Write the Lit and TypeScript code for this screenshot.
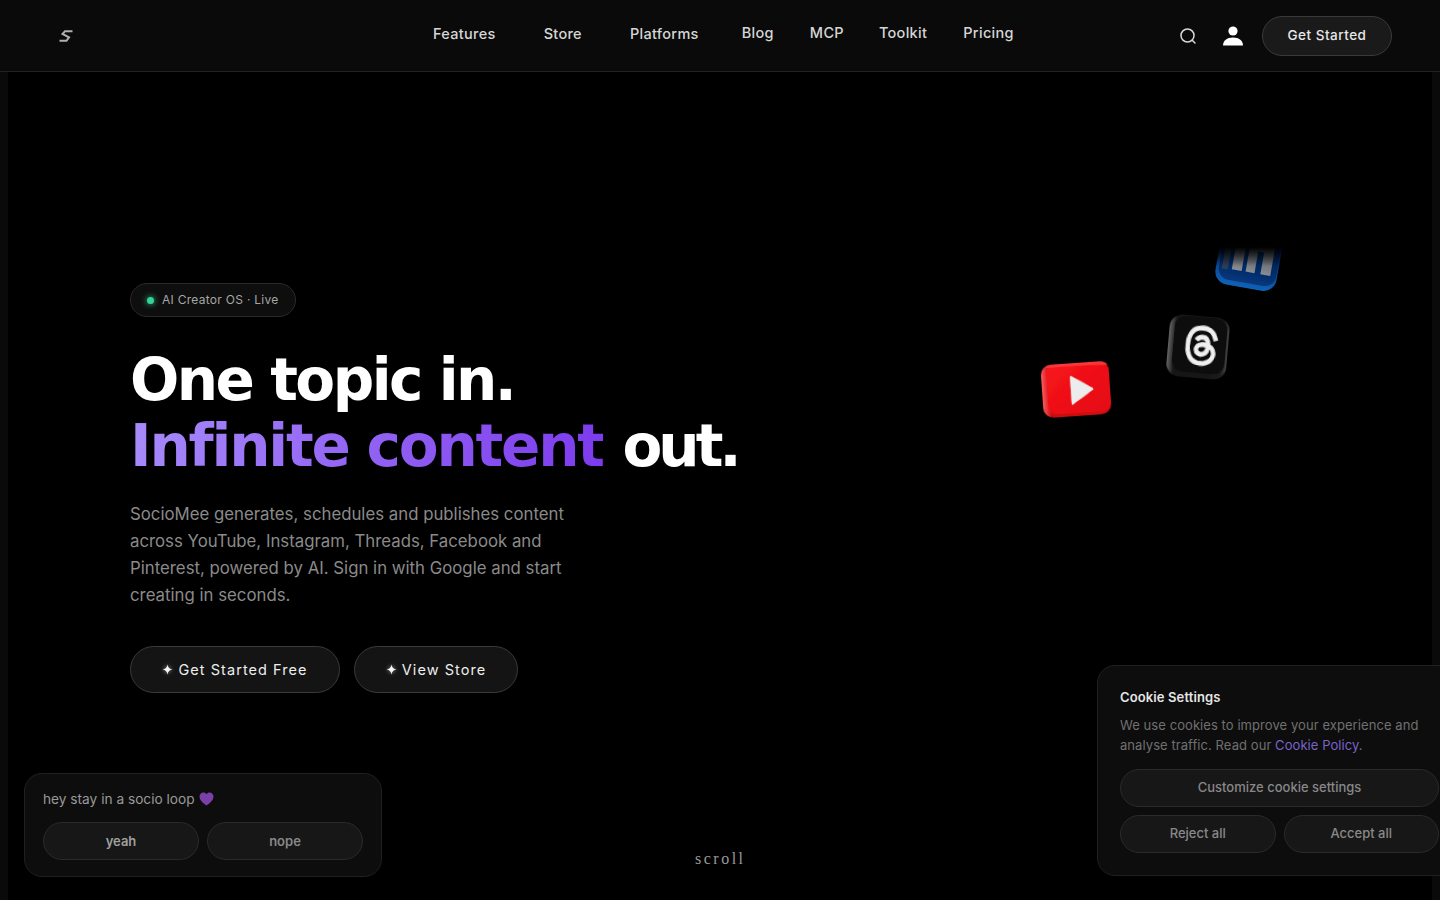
import { LitElement, html, css, svg } from "lit";
import { customElement } from "lit/decorators.js";

const navItems = [
  { label: "Features", cls: "drop" },
  { label: "Store", cls: "drop" },
  { label: "Platforms", cls: "plat" },
  { label: "Blog", cls: "up" },
  { label: "MCP", cls: "up tight" },
  { label: "Toolkit", cls: "up" },
  { label: "Pricing", cls: "up" },
];

const threadsPath = "M12.186 24h-.007c-3.581-.024-6.334-1.205-8.184-3.509C2.35 18.44 1.5 15.586 1.472 12.01v-.017c.03-3.579.879-6.43 2.525-8.482C5.845 1.205 8.6.024 12.18 0h.014c2.746.02 5.043.725 6.826 2.098 1.677 1.29 2.858 3.13 3.509 5.467l-2.04.569c-1.104-3.96-3.898-5.984-8.304-6.015-2.91.022-5.11.936-6.54 2.717C4.307 6.504 3.616 8.914 3.589 12c.027 3.086.718 5.496 2.057 7.164 1.43 1.783 3.631 2.698 6.54 2.717 2.623-.02 4.358-.631 5.8-2.045 1.647-1.613 1.618-3.593 1.09-4.798-.31-.71-.873-1.3-1.634-1.75-.192 1.352-.622 2.446-1.284 3.272-.886 1.102-2.14 1.704-3.73 1.79-1.202.065-2.361-.218-3.259-.801-1.063-.689-1.685-1.74-1.752-2.964-.065-1.19.408-2.285 1.33-3.082.88-.76 2.119-1.207 3.583-1.291a13.853 13.853 0 0 1 3.02.142c-.126-.742-.375-1.332-.75-1.757-.513-.586-1.308-.883-2.359-.89h-.029c-.844 0-1.992.232-2.721 1.32L7.734 7.847c.98-1.454 2.568-2.256 4.478-2.256h.044c3.194.02 5.097 1.975 5.287 5.388.108.046.216.094.321.142 1.49.7 2.58 1.761 3.154 3.07.797 1.82.871 4.79-1.548 7.158-1.85 1.81-4.094 2.628-7.277 2.65Zm1.003-11.69c-.242 0-.487.007-.739.021-1.836.103-2.98.946-2.916 2.143.067 1.256 1.452 1.839 2.784 1.767 1.224-.065 2.818-.543 3.086-3.71a10.5 10.5 0 0 0-2.215-.221z";

@customElement("app-root")
export class AppRoot extends LitElement {
  static styles = css`
    :host {
      display: block;
      position: relative;
      height: 900px;
      overflow: hidden;
      background: #0a0a0a;
      color: #fff;
      font-family: "Inter", "Noto Sans", sans-serif;
    }
    .nav {
      height: 71px;
      border-bottom: 1px solid #222;
      background: #0a0a0a;
      display: flex;
      align-items: center;
      position: relative;
    }
    .logo { margin-left: 58px; width: 16px; height: 14px; display: block; }
    .links {
      position: absolute;
      left: 433px;
      top: 0;
      height: 66px;
      display: flex;
      align-items: center;
    }
    .link { font-size: 14.5px; font-weight: 500; color: #d6d6d6; letter-spacing: 0.3px; white-space: nowrap; }
    .link.drop { margin-right: 48px; padding-top: 1px; }
    .link.plat { margin-right: 43px; padding-top: 1px; }
    .link.up { margin-right: 36px; padding-bottom: 1px; }
    .link.tight { margin-right: 35px; }
    .right {
      margin-left: auto;
      margin-right: 48px;
      display: flex;
      align-items: center;
    }
    .search { width: 18px; height: 18px; margin-right: 25px; display: block; }
    .user { width: 22px; height: 22px; margin-right: 18px; display: block; }
    .cta {
      width: 130px;
      height: 40px;
      box-sizing: border-box;
      border: 1px solid #3a3a3a;
      border-radius: 20px;
      background: #1a1a1a;
      color: #e8e8e8;
      font: 500 13.5px "Inter", sans-serif;
      letter-spacing: 0.5px;
      padding-bottom: 2px;
      display: flex;
      align-items: center;
      justify-content: center;
    }
    .main {
      margin: 0 8px;
      height: 828px;
      background: #000;
      position: relative;
      box-sizing: border-box;
      padding: 211px 0 0 122px;
    }
    .badge {
      display: inline-flex;
      align-items: center;
      height: 34px;
      box-sizing: border-box;
      width: 166px;
      padding: 0 0 2px 16px;
      border: 1px solid #2a2a2a;
      border-radius: 17px;
      background: #0e0e0e;
      font-size: 12px;
      color: #a5a5a5;
      letter-spacing: 0.28px;
      white-space: nowrap;
    }
    .dot {
      width: 7px;
      height: 7px;
      border-radius: 50%;
      background: #34d399;
      box-shadow: 0 0 6px #34d399;
      margin: 2px 8px 0 0;
    }
    h1 {
      margin: 30px 0 0;
      font: 700 58px/66px "DejaVu Sans", sans-serif;
      letter-spacing: -2.5px;
      color: #fff;
      white-space: nowrap;
    }
    .grad {
      background: linear-gradient(100deg, #a78bfa, #7c3aed);
      -webkit-background-clip: text;
      background-clip: text;
      color: transparent;
      letter-spacing: -2.2px;
    }
    .out { letter-spacing: -4px; margin-left: 2px; }
    .lead {
      margin: 22px 0 0;
      width: 450px;
      font-size: 16.8px;
      line-height: 27px;
      color: #8a8a8a;
    }
    .actions { display: flex; gap: 14px; margin-top: 37px; }
    .btn {
      height: 47px;
      box-sizing: border-box;
      border: 1px solid #3a3a3a;
      border-radius: 24px;
      background: #141414;
      color: #eee;
      font-size: 14.5px;
      font-weight: 400;
      letter-spacing: 1.05px;
      padding-bottom: 1px;
      display: flex;
      align-items: center;
      justify-content: center;
      gap: 5px;
    }
    .btn.a { width: 210px; }
    .btn.b { width: 164px; }
    .star { width: 11px; height: 11px; display: block; filter: drop-shadow(0 0 2px #fff8); }
    .float { position: absolute; left: 1020px; top: 240px; width: 280px; height: 190px; }
    .scroll {
      position: absolute;
      left: 687px;
      top: 778px;
      font: 16px "Liberation Serif", serif;
      letter-spacing: 2.5px;
      color: #9a9a9a;
    }
    .card {
      position: absolute;
      box-sizing: border-box;
      background: #0d0d0d;
      border: 1px solid #202020;
      border-radius: 18px;
    }
    .loop { left: 24px; top: 773px; width: 358px; height: 104px; padding: 16px 18px; }
    .loop p { margin: 0; font-size: 13.7px; line-height: 18px; color: #999; display: flex; align-items: center; gap: 4px; white-space: nowrap; }
    .heart { width: 15px; height: 14px; display: block; }
    .row { display: flex; gap: 8px; }
    .loop .row { margin-top: 14px; }
    .pill {
      flex: 1;
      height: 38px;
      box-sizing: border-box;
      border: 1px solid #2a2a2a;
      border-radius: 19px;
      background: #171717;
      font-size: 13px;
      font-weight: 600;
      color: #888;
      display: flex;
      align-items: center;
      justify-content: center;
    }
    .pill.y { color: #a0a0a0; }
    .cookie { left: 1097px; top: 665px; width: 365px; height: 211px; padding: 21px 22px; }
    .cookie h3 { margin: 0; font-size: 13px; line-height: 20px; font-weight: 600; color: #e6e6e6; letter-spacing: 0.12px; }
    .cookie p { margin: 8px 0 0; font-size: 13px; line-height: 20px; color: #707070; white-space: nowrap; letter-spacing: 0.07px; }
    .cookie a { color: #7a63c9; }
    .stack { margin-top: 14px; display: flex; flex-direction: column; gap: 8px; }
    .stack > .pill { flex: none; }
    .cookie .pill { font-weight: 500; padding-bottom: 2px; }
  `;

  star() {
    return html`<svg class="star" viewBox="0 0 12 12" fill="#f4f4f4"><path d="M6 0.5C6.5 3.8 8.2 5.5 11.5 6C8.2 6.5 6.5 8.2 6 11.5C5.5 8.2 3.8 6.5 0.5 6C3.8 5.5 5.5 3.8 6 0.5Z"/></svg>`;
  }

  render() {
    return html`
      <header class="nav">
        <svg class="logo" viewBox="0 0 16 14" fill="none" stroke="#b0b0b0" stroke-width="2">
          <path d="M14.5 2.2H7L4.5 5L11 8.4L8.5 11.8H1.5"/>
        </svg>
        <nav class="links">
          ${navItems.map((n) => html`<span class="link ${n.cls}">${n.label}</span>`)}
        </nav>
        <div class="right">
          <svg class="search" viewBox="0 0 18 18" fill="none" stroke="#d8d8d8" stroke-width="1.5" stroke-linecap="round">
            <circle cx="8.5" cy="8.5" r="6.5"/><path d="M13.2 13.2L16 16"/>
          </svg>
          <svg class="user" viewBox="0 0 22 22" fill="#fff">
            <circle cx="11" cy="6" r="4.6"/>
            <path d="M1 20.5c0-5 4-8 10-8s10 3 10 8z"/>
          </svg>
          <div class="cta">Get Started</div>
        </div>
      </header>
      <main class="main">
        <div class="badge"><span class="dot"></span>AI Creator OS · Live</div>
        <h1>One topic in.<br /><span class="grad">Infinite content</span> <span class="out">out.</span></h1>
        <p class="lead">SocioMee generates, schedules and publishes content across YouTube, Instagram, Threads, Facebook and Pinterest, powered by AI. Sign in with Google and start creating in seconds.</p>
        <div class="actions">
          <div class="btn a">${this.star()} Get Started Free</div>
          <div class="btn b">${this.star()} View Store</div>
        </div>
        <div class="scroll">scroll</div>
      </main>
      <svg class="float" viewBox="1020 240 280 190">
        <defs>
          <linearGradient id="yt" x1="0" y1="0" x2="1" y2="1"><stop offset="0" stop-color="#f8141c"/><stop offset="1" stop-color="#e40c12"/></linearGradient>
          <linearGradient id="ytb" x1="0" y1="0" x2="1" y2="0"><stop offset="0" stop-color="#ff5a5a"/><stop offset=".12" stop-color="#c90a10"/><stop offset="1" stop-color="#d40b12"/></linearGradient>
          <linearGradient id="tb" x1="0" y1="0" x2="1" y2="0"><stop offset="0" stop-color="#666"/><stop offset=".12" stop-color="#161616"/><stop offset=".9" stop-color="#1a1a1a"/><stop offset="1" stop-color="#444"/></linearGradient>
          <linearGradient id="li" x1="0" y1="0" x2="0" y2="1"><stop offset=".3" stop-color="#02173f"/><stop offset="1" stop-color="#07367c"/></linearGradient>
          <linearGradient id="lib" x1="0" y1="0" x2="0" y2="1"><stop offset=".5" stop-color="#052d6e"/><stop offset="1" stop-color="#0b63b8"/></linearGradient>
          <linearGradient id="lt" x1="0" y1="0" x2="0" y2="1"><stop offset="0" stop-color="#3a3f48"/><stop offset="1" stop-color="#8a8d92"/></linearGradient>
          <linearGradient id="fade" gradientUnits="userSpaceOnUse" x1="0" y1="247" x2="0" y2="266"><stop offset="0" stop-color="#000"/><stop offset="1" stop-color="#fff"/></linearGradient>
          <mask id="top" maskUnits="userSpaceOnUse" x="1200" y="240" width="100" height="60"><rect x="1200" y="240" width="100" height="60" fill="url(#fade)"/></mask>
          <filter id="soft" x="-5%" y="-5%" width="110%" height="110%"><feGaussianBlur stdDeviation="0.6"/></filter>
        </defs>
        ${svg`
          <g mask="url(#top)" filter="url(#soft)">
            <g transform="rotate(10 1249 258)">
              <rect x="1218" y="220" width="62" height="68" rx="13" fill="url(#lib)"/>
              <rect x="1221" y="220" width="58" height="63" rx="11" fill="url(#li)"/>
              <path d="M1224 240h6v33h-6z" fill="#2f3d55"/>
              <path d="M1234 240h10v32h-10zM1248 240h25v32h-10v-22h-6v22h-9z" fill="url(#lt)"/>
            </g>
          </g>
          <g transform="rotate(-4 1076 389)" filter="url(#soft)">
            <rect x="1042" y="363" width="68" height="53" rx="10" fill="url(#ytb)"/>
            <rect x="1047" y="363" width="63" height="50" rx="9" fill="url(#yt)"/>
            <path d="M1047 366q1-3 5-3h48q8 0 9 4q-30-2-62-1z" fill="#ff5050" opacity=".6"/>
            <path d="M1071.500 376.500l21 13.500-21 13.500z" fill="#ececec" stroke="#ececec" stroke-width="1.5" stroke-linejoin="round"/>
          </g>
          <g transform="rotate(5 1198 346)" filter="url(#soft)">
            <rect x="1168" y="316" width="60" height="62" rx="13" fill="url(#tb)"/>
            <rect x="1173" y="317" width="53" height="56" rx="11" fill="#111"/>
            <path transform="translate(1184 326) scale(1.45 1.62)" d="${threadsPath}" fill="#f0f0f0" stroke="#f0f0f0" stroke-width=".8"/>
          </g>
        `}
      </svg>
      <section class="card loop">
        <p>hey stay in a socio loop
          <svg class="heart" viewBox="0 0 16 15"><path d="M8 14.500C3 11 .5 8.300.5 5 .5 2.400 2.500.5 4.700.5 6.100.5 7.300 1.200 8 2.400 8.700 1.200 9.900.5 11.300.5 13.500.5 15.500 2.400 15.500 5 15.500 8.300 13 11 8 14.500Z" fill="#7b3fa8"/></svg>
        </p>
        <div class="row">
          <div class="pill y">yeah</div>
          <div class="pill">nope</div>
        </div>
      </section>
      <section class="card cookie">
        <h3>Cookie Settings</h3>
        <p>We use cookies to improve your experience and<br />analyse traffic. Read our <a>Cookie Policy</a>.</p>
        <div class="stack">
          <div class="pill">Customize cookie settings</div>
          <div class="row">
            <div class="pill">Reject all</div>
            <div class="pill">Accept all</div>
          </div>
        </div>
      </section>
    `;
  }
}
